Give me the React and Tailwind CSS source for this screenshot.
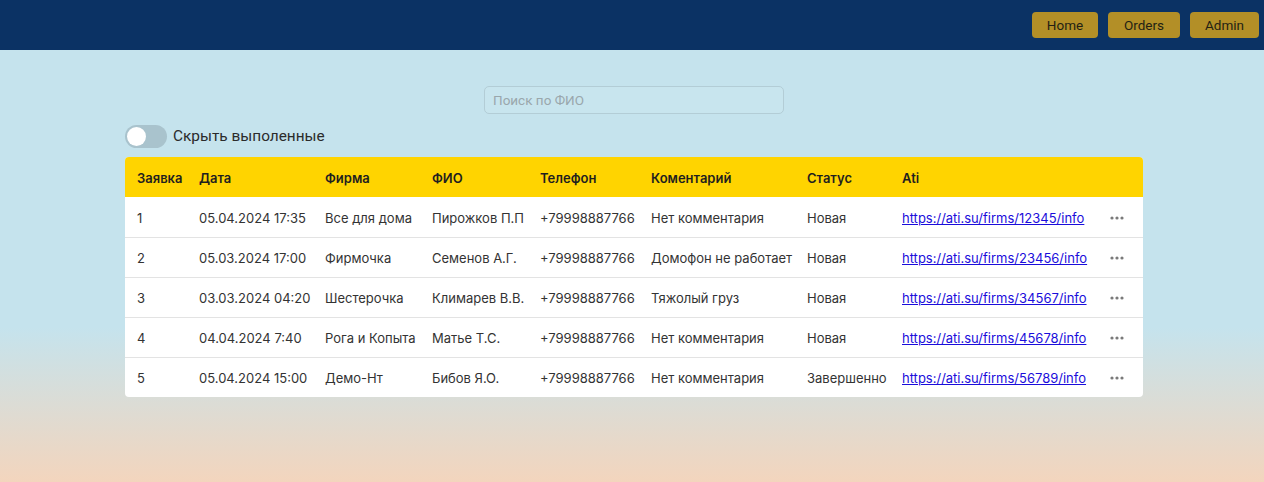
import React from "react";

const rows = [
  ["1", "05.04.2024 17:35", "Все для дома", "Пирожков П.П", "+79998887766", "Нет комментария", "Новая", "https://ati.su/firms/12345/info"],
  ["2", "05.03.2024 17:00", "Фирмочка", "Семенов А.Г.", "+79998887766", "Домофон не работает", "Новая", "https://ati.su/firms/23456/info"],
  ["3", "03.03.2024 04:20", "Шестерочка", "Климарев В.В.", "+79998887766", "Тяжолый груз", "Новая", "https://ati.su/firms/34567/info"],
  ["4", "04.04.2024 7:40", "Рога и Копыта", "Матье Т.С.", "+79998887766", "Нет комментария", "Новая", "https://ati.su/firms/45678/info"],
  ["5", "05.04.2024 15:00", "Демо-Нт", "Бибов Я.О.", "+79998887766", "Нет комментария", "Завершенно", "https://ati.su/firms/56789/info"],
];

const headers = ["Заявка", "Дата", "Фирма", "ФИО", "Телефон", "Коментарий", "Статус", "Ati", ""];
const widths = ["w-[62px]", "w-[126px]", "w-[107px]", "w-[108px]", "w-[111px]", "w-[156px]", "w-[95px]", "w-[208px]", "w-[45px]"];

function Dots() {
  return (
    <svg width="14" height="4" viewBox="0 0 14 4" className="block">
      <circle cx="2" cy="2" r="1.6" fill="#7a7a7a" />
      <circle cx="7" cy="2" r="1.6" fill="#7a7a7a" />
      <circle cx="12" cy="2" r="1.6" fill="#7a7a7a" />
    </svg>
  );
}

export default function App() {
  return (
    <div className="min-h-[482px] w-full bg-[linear-gradient(to_bottom,#c5e3ed_0%,#c5e3ed_68%,#f3d5bd_100%)] font-['Inter',sans-serif]">
      <header className="h-[50px] bg-[#0b3264] flex items-center justify-end gap-[10px] pr-[5px]">
        {[["Home", "w-[66px]"], ["Orders", "w-[72px]"], ["Admin", "w-[69px]"]].map(([t, w]) => (
          <button
            key={t}
            className={`${w} h-[26px] rounded-[4px] bg-[#b38f27] text-[#231f14] text-[13.5px] font-['Roboto',sans-serif] flex items-center justify-center`}
          >
            {t}
          </button>
        ))}
      </header>
      <main className="pt-[36px] pl-[4px]">
        <div className="w-[1018px] mx-auto flex flex-col">
          <div className="w-[300px] h-[28px] mx-auto rounded-[5px] border border-[#b3cdd6] bg-[#c8e5ee] flex items-center pl-[8px]">
            <input
              placeholder="Поиск по ФИО"
              className="bg-transparent outline-none w-full text-[13.5px] font-['Roboto',sans-serif] text-[#333] placeholder:text-[#9aa7ac]"
            />
          </div>
          <div className="mt-[11px] flex items-center gap-[6px] h-[23px]">
            <div className="w-[42px] h-[23px] rounded-full bg-[#a9c3cd] flex items-center pl-[2px]">
              <div className="w-[19px] h-[19px] rounded-full bg-white" />
            </div>
            <span className="text-[15.4px] text-[#2b2b2b] font-['Roboto',sans-serif]">Скрыть выполенные</span>
          </div>
          <div className="mt-[9px] rounded-[4px] overflow-hidden bg-white">
            <table className="w-full table-fixed border-collapse text-[13px]">
              <thead>
                <tr className="h-[40px] bg-[#ffd400]">
                  {headers.map((h, i) => (
                    <th key={i} className={`${widths[i]} text-left font-semibold text-[#1f1f1f] pl-[12px] pr-0 pt-[3px] pb-0 whitespace-nowrap`}>
                      {h}
                    </th>
                  ))}
                </tr>
              </thead>
              <tbody>
                {rows.map((r, ri) => (
                  <tr key={ri} className={`h-[40px] ${ri < rows.length - 1 ? "border-b border-[#e3e3e3]" : ""}`}>
                    {r.map((c, ci) => (
                      <td key={ci} className="pl-[12px] pt-[3px] pb-0 text-[#333] whitespace-nowrap">
                        {ci === 7 ? (
                          <a href="#" className="text-[#1a0ddb] underline">{c}</a>
                        ) : (
                          c
                        )}
                      </td>
                    ))}
                    <td className="pl-[12px] pt-[2px] pb-0">
                      <Dots />
                    </td>
                  </tr>
                ))}
              </tbody>
            </table>
          </div>
        </div>
      </main>
    </div>
  );
}
